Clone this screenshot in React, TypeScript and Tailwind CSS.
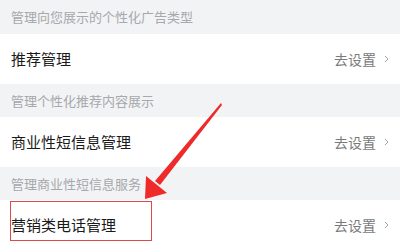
const font = { fontFamily: '"Noto Sans CJK SC", "Noto Sans", sans-serif' }

function SectionHeader({ text, h }: { text: string; h: string }) {
  return (
    <div className={`${h} bg-[#f2f3f5] flex items-center pl-[11px] text-[13px] text-[#a6a8ab]`}>
      {text}
    </div>
  )
}

function Row({ title }: { title: string }) {
  return (
    <div className="h-[50px] bg-white flex items-center justify-between pl-[11px] pr-[11px]">
      <span className="text-[15px] text-[#1a1a1a]">{title}</span>
      <span className="flex items-center gap-[8px] text-[14px] text-[#7a7a7a]">
        去设置
        <svg width="5" height="8" viewBox="0 0 5 8" fill="none">
          <path d="M1 1 L4 4 L1 7" stroke="#999" strokeWidth="0.9" />
        </svg>
      </span>
    </div>
  )
}

export default function App() {
  return (
    <div className="relative w-[400px] h-[246px] overflow-hidden bg-white" style={font}>
      <SectionHeader text="管理向您展示的个性化广告类型" h="h-[34px]" />
      <Row title="推荐管理" />
      <SectionHeader text="管理个性化推荐内容展示" h="h-[33px]" />
      <Row title="商业性短信息管理" />
      <SectionHeader text="管理商业性短信息服务" h="h-[33px]" />
      <Row title="营销类电话管理" />

      <div className="absolute left-[10px] top-[201px] w-[142px] h-[40px] border border-[#e0484f]" />

      <svg className="absolute left-0 top-0" width="400" height="246" viewBox="0 0 400 246">
        <polygon points="221,103 222,105 160,185 155,181" fill="#ee2a2a" />
        <polygon points="145,199 146,176 167,193" fill="#ee2a2a" />
      </svg>
    </div>
  )
}
